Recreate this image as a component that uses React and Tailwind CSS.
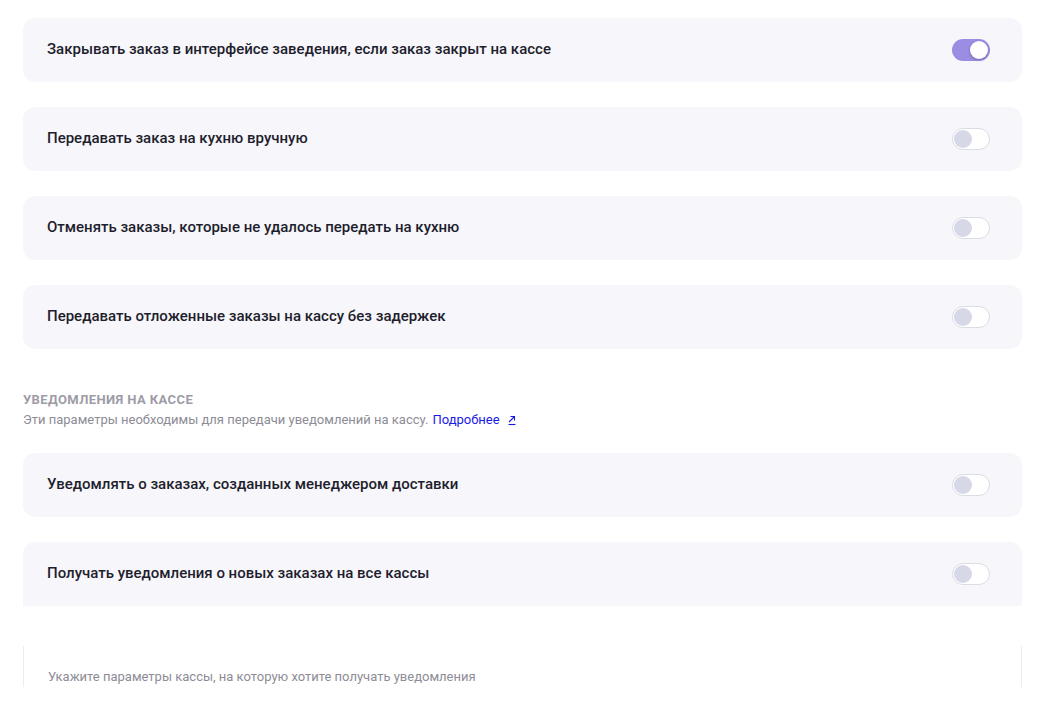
import React from 'react';

const Toggle = ({ on }) => {
  return (
    <div
      className={
        on
          ? 'w-[38px] h-[22px] rounded-full bg-[#9a8de3] flex items-center justify-end px-[2px] shrink-0'
          : 'w-[38px] h-[22px] rounded-full bg-white border border-[#dcdce4] flex items-center justify-start px-[1px] shrink-0'
      }
    >
      <div
        className={
          on
            ? 'w-[18px] h-[18px] rounded-full bg-white shadow-[0_1px_3px_rgba(0,0,0,0.25)]'
            : 'w-[18px] h-[18px] rounded-full bg-[#d6d8e8]'
        }
      />
    </div>
  );
};

const Row = ({ title, on, flatBottom }) => {
  return (
    <div
      className={
        'flex items-center justify-between h-16 pl-6 pr-8 bg-[#f7f6fb] ' +
        (flatBottom ? 'rounded-t-xl' : 'rounded-xl')
      }
    >
      <p className="text-[15px] leading-5 font-medium text-[#1e1e2d] -mt-[2px]">{title}</p>
      <Toggle on={on} />
    </div>
  );
};

export default function App() {
  return (
    <div
      className="w-full min-h-[714px] bg-white pl-[23px] pr-[36px] pt-[18px]"
      style={{ fontFamily: 'Roboto, "Noto Sans", sans-serif' }}
    >
      <div className="flex flex-col gap-[25px]">
        <Row title="Закрывать заказ в интерфейсе заведения, если заказ закрыт на кассе" on />
        <Row title="Передавать заказ на кухню вручную" />
        <Row title="Отменять заказы, которые не удалось передать на кухню" />
        <Row title="Передавать отложенные заказы на кассу без задержек" />
      </div>

      {/* уведомления */}
      <div className="mt-[41px] mb-[23px]">
        <h3 className="text-[13px] font-bold uppercase tracking-[0.4px] text-[#9d9ca6] leading-5">
          Уведомления на кассе
        </h3>
        <p className="text-[13px] text-[#8d8c96] leading-5 flex items-center">
          Эти параметры необходимы для передачи уведомлений на кассу.
          <a href="#" className="text-[#1a1ae6] ml-1 flex items-center">
            Подробнее
            <svg width="12" height="12" viewBox="0 0 12 12" fill="none" className="ml-[6px]">
              <path d="M3 8L8.5 2.5M4.5 2.5H8.5V6.5" stroke="#1a1ae6" strokeWidth="1.1" />
              <path d="M2.5 10.5H9.5" stroke="#1a1ae6" strokeWidth="1.1" />
            </svg>
          </a>
        </p>
      </div>

      <div className="flex flex-col gap-[25px]">
        <Row title="Уведомлять о заказах, созданных менеджером доставки" />
        <Row title="Получать уведомления о новых заказах на все кассы" flatBottom />
      </div>

      <div className="mt-10 border-x border-[#ececf2] h-[41px] pl-6 pt-[22px]">
        <p className="text-[13px] leading-[18px] text-[#8d8c96]">
          Укажите параметры кассы, на которую хотите получать уведомления
        </p>
      </div>
    </div>
  );
}
